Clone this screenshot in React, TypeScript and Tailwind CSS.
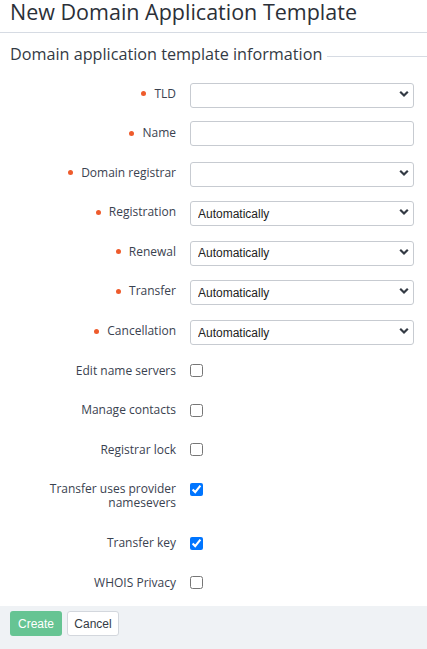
import React from "react";

const selectRows = [
  { label: "TLD", value: "" },
  { label: "Name", input: true },
  { label: "Domain registrar", value: "" },
  { label: "Registration", value: "Automatically" },
  { label: "Renewal", value: "Automatically" },
  { label: "Transfer", value: "Automatically" },
  { label: "Cancellation", value: "Automatically" },
];

const checkRows = [
  { label: "Edit name servers", checked: false },
  { label: "Manage contacts", checked: false },
  { label: "Registrar lock", checked: false },
  { label: "Transfer uses provider namesevers", checked: true },
  { label: "Transfer key", checked: true },
  { label: "WHOIS Privacy", checked: false },
];

function Chevron() {
  return (
    <svg
      width="10"
      height="7"
      viewBox="0 0 10 7"
      className="pointer-events-none absolute right-[5px] top-1/2 -translate-y-1/2"
    >
      <polyline points="1.2,1.2 5,5 8.8,1.2" fill="none" stroke="#333a44" strokeWidth="2.2" />
    </svg>
  );
}

export default function App() {
  return (
    <div className="flex min-h-[649px] w-full flex-col bg-white font-['Open_Sans',sans-serif] text-[#3a4250]">
      <div className="h-[33px] border-b border-[#d6dbe3] pl-[10px]">
        <h1 className="text-[21.5px] leading-[23px] text-[#2b3038]">New Domain Application Template</h1>
      </div>

      <div className="mt-[9px] flex items-center pl-[10px]">
        <span className="text-[16.2px] leading-6 text-[#333a44]">Domain application template information</span>
        <span className="ml-[5px] mt-1 h-px flex-1 bg-[#d6dbe3]" />
      </div>

      <div className="mt-[15px] grid grid-cols-[176px_1fr] gap-x-[14px] gap-y-[14.6px] pr-[13px]">
        {selectRows.map((r) => (
          <React.Fragment key={r.label}>
            <div className="flex h-[25px] items-center justify-end gap-[8px] text-[12px] leading-[14px]">
              <span className="h-[5px] w-[5px] rounded-full bg-[#ee5b2c]" />
              <span>{r.label}</span>
            </div>
            {r.input ? (
              <input
                type="text"
                className="h-[25px] w-full rounded-[3px] border border-[#c7cbd1] bg-white px-2 font-['Liberation_Sans',sans-serif] text-[12px] outline-none"
              />
            ) : (
              <div className="relative h-[25px]">
                <select
                  defaultValue={r.value}
                  className="h-[25px] w-full appearance-none rounded-[3px] border border-[#c7cbd1] bg-white pl-[7px] font-['Liberation_Sans',sans-serif] text-[12px] text-[#222] outline-none"
                >
                  <option value="">{""}</option>
                  <option value="Automatically">Automatically</option>
                  <option value="Manually">Manually</option>
                </select>
                <Chevron />
              </div>
            )}
          </React.Fragment>
        ))}

        {checkRows.map((r) => (
          <React.Fragment key={r.label}>
            <div className="flex min-h-[25px] items-start justify-end py-[5.5px] text-right text-[12px] leading-[14px]">
              <span className={r.label.length > 20 ? "w-[130px]" : ""}>{r.label}</span>
            </div>
            <div className="flex items-start">
              <input
                type="checkbox"
                defaultChecked={r.checked}
                className="m-0 mt-[6px] h-[13px] w-[13px]"
              />
            </div>
          </React.Fragment>
        ))}
      </div>

      <div className="mt-[11px] flex flex-1 gap-[5px] bg-[#eff2f5] pb-[13px] pl-[10px] pt-[5px]">
        <button className="h-[25px] w-[52px] rounded-[3px] bg-[#66c493] font-['Liberation_Sans',sans-serif] text-[12px] text-white">
          Create
        </button>
        <button className="h-[25px] w-[52px] rounded-[3px] border border-[#d3d7dd] bg-white font-['Liberation_Sans',sans-serif] text-[12px] text-[#333a44]">
          Cancel
        </button>
      </div>
    </div>
  );
}
